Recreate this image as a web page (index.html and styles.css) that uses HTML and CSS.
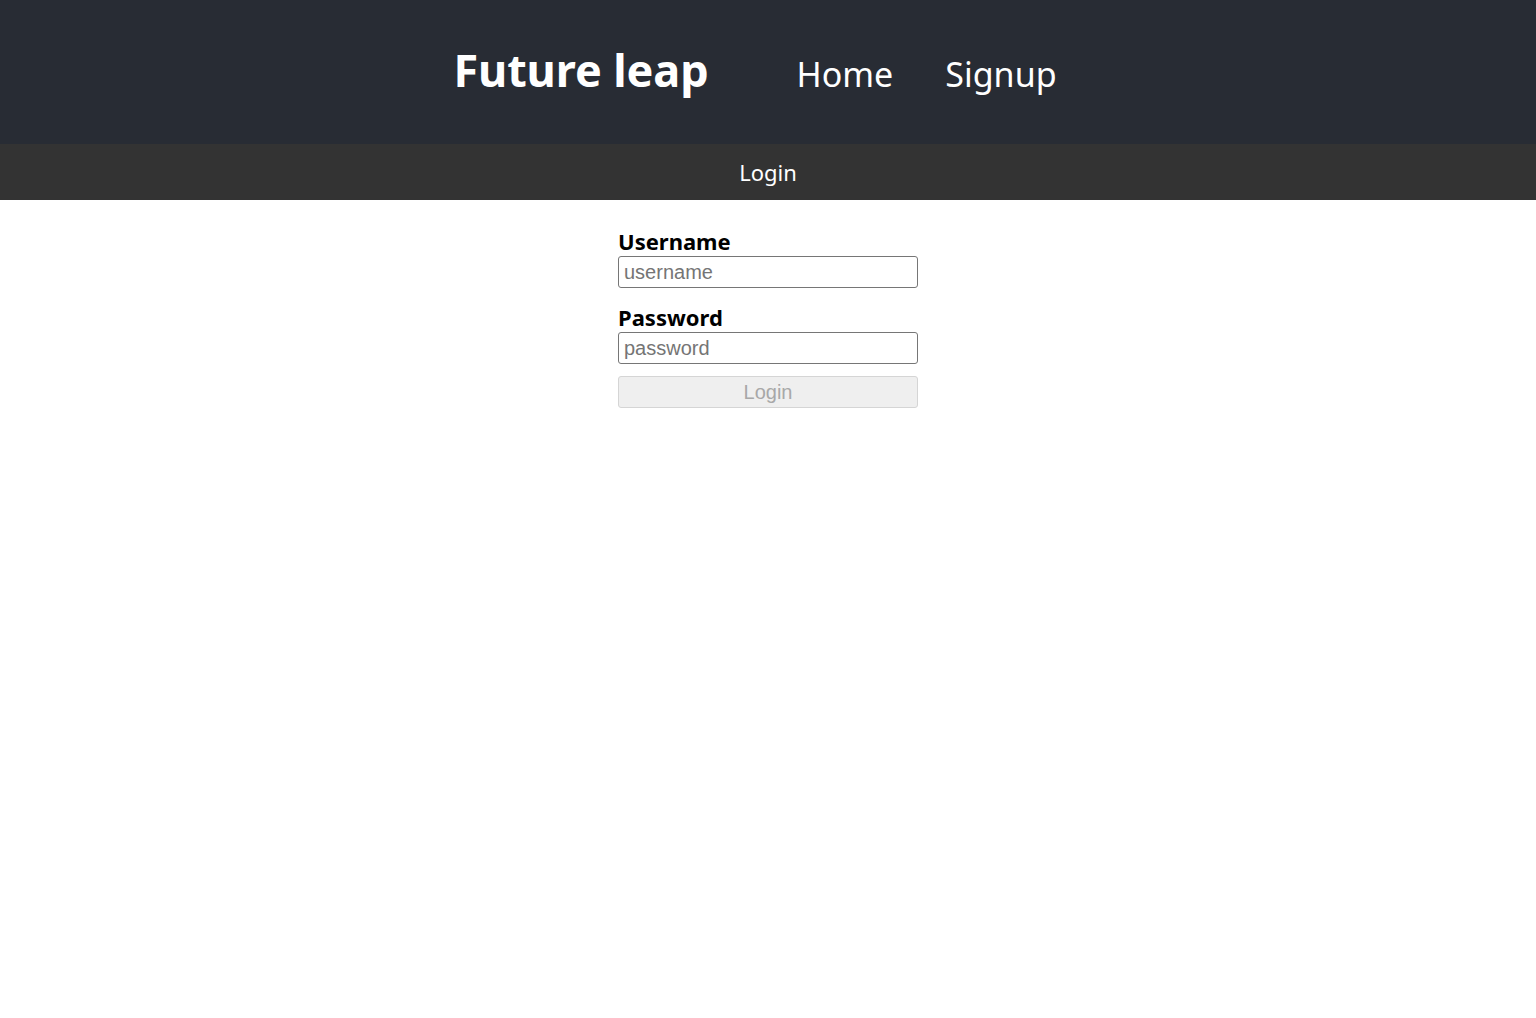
FILE: index.html
```html
<!DOCTYPE html>
<html>
<head>
<meta charset="utf-8">
<link rel="stylesheet" href="styles.css">
</head>
<body>
<header class="topbar">
  <div class="brand">Future leap</div>
  <nav class="nav">
    <a class="nav-link" href="#">Home</a>
    <a class="nav-link" href="#">Signup</a>
  </nav>
</header>
<div class="subbar">Login</div>
<main class="content">
  <form class="login-form">
    <label class="field-label" for="u">Username</label>
    <input class="field-input" id="u" type="text" placeholder="username">
    <label class="field-label" for="p">Password</label>
    <input class="field-input" id="p" type="password" placeholder="password">
    <button class="submit" type="button" disabled>Login</button>
  </form>
</main>
</body>
</html>
```
FILE: styles.css
```css
html, body {
  margin: 0;
  padding: 0;
  background: #fff;
}
body {
  font-family: "Noto Sans", "Open Sans", sans-serif;
}
.topbar {
  height: 144px;
  background: #282c34;
  color: #fff;
  display: flex;
  align-items: center;
  justify-content: center;
  box-sizing: border-box;
}
.brand {
  font-size: 45px;
  font-weight: 700;
  letter-spacing: -0.1px;
  margin-right: 88px;
  margin-top: -6px;
  transform: translateX(-13px);
}
.nav {
  display: flex;
  gap: 52px;
  margin-top: 4px;
  transform: translateX(-13px);
}
.nav-link {
  color: #fff;
  text-decoration: none;
  font-size: 34px;
  font-weight: 400;
}
.subbar {
  height: 56px;
  background: #333333;
  color: #fff;
  display: flex;
  align-items: center;
  justify-content: center;
  font-size: 22px;
}
.content {
  display: flex;
  justify-content: center;
  padding-top: 28px;
}
.login-form {
  width: 300px;
  display: flex;
  flex-direction: column;
}
.field-label {
  font-size: 22px;
  font-weight: 700;
  color: #000;
  line-height: 26px;
  padding-bottom: 2px;
}
.field-input {
  box-sizing: border-box;
  height: 32px;
  width: 300px;
  border: 1px solid #767676;
  border-radius: 3px;
  padding: 0 5px;
  font-family: "Liberation Sans", Arial, sans-serif;
  font-size: 20px;
  color: #000;
  margin: 0 0 16px 0;
}
.field-input::placeholder {
  color: #757575;
}
.submit {
  box-sizing: border-box;
  height: 32px;
  width: 300px;
  margin-top: -4px;
  background: #efefef;
  border: 1px solid #d5d5d5;
  border-radius: 3px;
  color: #a8a8a8;
  font-family: "Liberation Sans", Arial, sans-serif;
  font-size: 20px;
  padding: 0;
}
```
